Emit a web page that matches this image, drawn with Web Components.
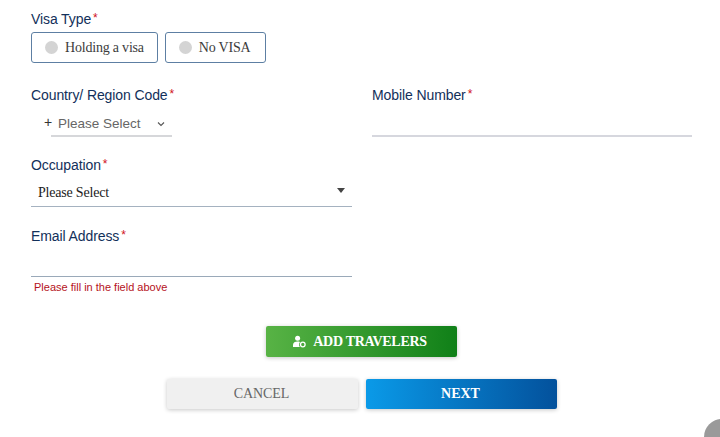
<!DOCTYPE html>
<html>
<head>
<meta charset="utf-8">
<style>
  html, body { margin: 0; height: 437px; overflow: hidden; background: #fff; }
  body { font-family: "Liberation Sans", Arial, sans-serif; }
</style>
</head>
<body>
<travel-form>
  <form-field slot="visa" label="Visa Type">
    <div style="display:flex;gap:7px">
      <radio-chip>Holding a visa</radio-chip>
      <radio-chip style="padding-right:14px">No VISA</radio-chip>
    </div>
  </form-field>
  <form-field slot="code" label="Country/ Region Code">
    <code-select></code-select>
  </form-field>
  <form-field slot="mobile" label="Mobile Number">
    <line-input tone="light"></line-input>
  </form-field>
  <form-field slot="job" label="Occupation">
    <job-select></job-select>
  </form-field>
  <form-field slot="email" label="Email Address" error="Please fill in the field above">
    <line-input></line-input>
  </form-field>
  <action-button slot="add" kind="green" icon>ADD TRAVELERS</action-button>
  <action-button slot="cancel" kind="grey">CANCEL</action-button>
  <action-button slot="next" kind="blue">NEXT</action-button>
</travel-form>

<script>
class TravelForm extends HTMLElement {
  constructor() {
    super();
    this.attachShadow({ mode: "open" });
    this.shadowRoot.innerHTML = `<style>
        :host { display: block; position: relative; width: 720px; height: 437px; overflow: hidden; }
        .form { display: flex; flex-direction: column; padding: 10px 28px 0 31px; }
        .row { display: grid; grid-template-columns: 321px 320px; column-gap: 20px; }
        .row-visa { height: 76px; }
        .row-code { height: 70px; }
        .row-job { height: 71px; }
        .row-email { height: 99px; }
        .actions { display: flex; flex-direction: column; align-items: center; }
        .top { width: 191px; }
        .bottom { display: grid; grid-template-columns: 191px 191px; column-gap: 8px; margin: 22px 0 0 1px; }
        .fab { position: absolute; left: 704px; top: 419px; width: 36px; height: 36px; border-radius: 50%; background: #9a9a9a; }
      </style>
      <div class="form">
        <div class="row-visa"><slot name="visa"></slot></div>
        <div class="row row-code"><slot name="code"></slot><slot name="mobile"></slot></div>
        <div class="row row-job"><slot name="job"></slot></div>
        <div class="row row-email"><slot name="email"></slot></div>
        <div class="actions">
          <div class="top"><slot name="add"></slot></div>
          <div class="bottom"><slot name="cancel"></slot><slot name="next"></slot></div>
        </div>
      </div>
      <div class="fab"></div>`;
  }
}

class FormField extends HTMLElement {
  constructor() {
    super();
    this.attachShadow({ mode: "open" });
    const error = this.getAttribute("error");
    this.shadowRoot.innerHTML = `<style>
        :host { display: block; font-family: "Liberation Sans", Arial, sans-serif; }
        .label { display: block; font-size: 14px; line-height: 16px; color: #12305a; height: 16px; letter-spacing: -0.1px; }
        .star { color: #d0121b; font-size: 12px; vertical-align: 2px; margin-left: 2px; letter-spacing: 0; }
        .error { font-size: 11px; line-height: 13px; color: #b5121b; padding: 4px 0 0 3px; }
      </style>
      <span class="label">${this.getAttribute("label")}<span class="star">*</span></span>
      <slot></slot>
      ${error ? `<div class="error">${error}</div>` : ""}`;
  }
}

class RadioChip extends HTMLElement {
  constructor() {
    super();
    this.attachShadow({ mode: "open" });
    this.shadowRoot.innerHTML = `<style>
        :host { display: inline-flex; align-items: center; gap: 7px; box-sizing: border-box; height: 31px; margin-top: 6px; padding: 0 13px; border: 1px solid #5d7fa3; border-radius: 3px; font: 14px "Liberation Serif", "Times New Roman", serif; letter-spacing: -0.2px; color: #3c3c3c; }
        .dot { width: 13px; height: 13px; border-radius: 50%; background: #d4d4d4; }
      </style>
      <span class="dot"></span><slot></slot>`;
  }
}

class CodeSelect extends HTMLElement {
  constructor() {
    super();
    this.attachShadow({ mode: "open" });
    this.shadowRoot.innerHTML = `<style>
        :host { display: flex; align-items: flex-start; margin-top: 7px; padding-left: 13px; color: #333; font-family: "Liberation Sans", Arial, sans-serif; }
        .plus { width: 7px; margin-top: 5px; font-size: 14px; line-height: 16px; }
        .box { display: flex; align-items: center; box-sizing: border-box; width: 121px; height: 28px; padding: 3px 0 0 7px; border-bottom: 2px solid #d6d7da; font-size: 13.5px; color: #666; }
        .text { width: 99px; }
      </style>
      <span class="plus">+</span>
      <div class="box"><span class="text">Please Select</span>
        <svg width="8" height="6" viewBox="0 0 8 6"><path d="M1 1.5 L4 4.5 L7 1.5" fill="none" stroke="#555" stroke-width="1.1"/></svg>
      </div>`;
  }
}

class JobSelect extends HTMLElement {
  constructor() {
    super();
    this.attachShadow({ mode: "open" });
    this.shadowRoot.innerHTML = `<style>
        :host { display: flex; align-items: center; justify-content: space-between; box-sizing: border-box; height: 35px; padding: 7px 7px 0 7px; border-bottom: 1px solid #a5b2c0; font: 14px "Liberation Serif", "Times New Roman", serif; letter-spacing: -0.2px; color: #222; }
        svg { margin-top: -4px; }
      </style>
      <span>Please Select</span>
      <svg width="8" height="5" viewBox="0 0 8 5"><path d="M0 0 H8 L4 5 Z" fill="#444"/></svg>`;
  }
}

class LineInput extends HTMLElement {
  constructor() {
    super();
    this.attachShadow({ mode: "open" });
    const light = this.getAttribute("tone") === "light";
    this.shadowRoot.innerHTML = `<style>
        :host { display: block; box-sizing: border-box; height: ${light ? 35 : 34}px; border-bottom: ${light ? "2px solid #d6d7de" : "1px solid #9aa9b9"}; }
      </style>`;
  }
}

class ActionButton extends HTMLElement {
  constructor() {
    super();
    this.attachShadow({ mode: "open" });
    const icon = this.hasAttribute("icon")
      ? `<svg width="13" height="13" viewBox="0 0 13 12"><circle cx="4.6" cy="2.7" r="2.5" fill="#fff"/><path d="M0 11.5 V9.4 C0 7.2 2 6 4.6 6 C5.5 6 6.3 6.1 7 6.4 C6 7.3 5.6 9.8 6.8 11.5 Z" fill="#fff"/><circle cx="9.8" cy="9" r="2.3" fill="none" stroke="#fff" stroke-width="1.3"/></svg>`
      : "";
    this.shadowRoot.innerHTML = `<style>
        :host { display: flex; align-items: center; justify-content: center; gap: 7px; box-sizing: border-box; width: 191px; padding-right: 2px; border-radius: 2px; font: bold 14px "Liberation Serif", "Times New Roman", serif; color: #fff; box-shadow: 0 1px 4px rgba(0,0,0,.22); }
        :host([kind="green"]) { height: 31px; padding-right: 3px; letter-spacing: -0.3px; background: linear-gradient(90deg, #58b345, #108018); }
        :host([kind="blue"]) { height: 30px; background: linear-gradient(90deg, #0a9ae8, #03519c); }
        :host([kind="grey"]) { height: 30px; background: #f0f0f0; color: #666; font-weight: normal; letter-spacing: -0.1px; }
      </style>
      ${icon}<slot></slot>`;
  }
}

customElements.define("travel-form", TravelForm);
customElements.define("form-field", FormField);
customElements.define("radio-chip", RadioChip);
customElements.define("code-select", CodeSelect);
customElements.define("job-select", JobSelect);
customElements.define("line-input", LineInput);
customElements.define("action-button", ActionButton);
</script>
</body>
</html>
